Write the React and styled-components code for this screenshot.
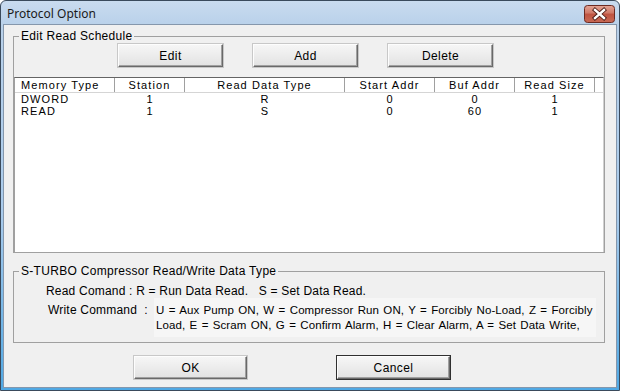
import React from "react";
import styled, { createGlobalStyle } from "styled-components";

const columns = [
  { title: "Memory Type", width: 100, align: "left" },
  { title: "Station", width: 70 },
  { title: "Read Data Type", width: 160 },
  { title: "Start Addr", width: 90 },
  { title: "Buf Addr", width: 80 },
  { title: "Read Size", width: 80 },
];

const rows = [
  ["DWORD", "1", "R", "0", "0", "1"],
  ["READ", "1", "S", "0", "60", "1"],
];

function CloseIcon() {
  return (
    <svg width="31" height="18" viewBox="0 0 31 18">
      <defs>
        <linearGradient id="cg" x1="0" y1="0" x2="0" y2="1">
          <stop offset="0" stopColor="#e4a596" />
          <stop offset="0.45" stopColor="#cf7867" />
          <stop offset="0.5" stopColor="#bf5341" />
          <stop offset="1" stopColor="#c86a55" />
        </linearGradient>
      </defs>
      <rect x="0.5" y="0.5" width="30" height="17" rx="3" fill="url(#cg)" stroke="#6b2a22" />
      <path d="M11 5 L20 13 M20 5 L11 13" stroke="#4a1a14" strokeWidth="4.2" strokeLinecap="square" />
      <path d="M11 5 L20 13 M20 5 L11 13" stroke="#ffffff" strokeWidth="2.4" strokeLinecap="square" />
    </svg>
  );
}

export default function App() {
  return (
    <Dialog.Window>
      <GlobalStyle />
      <Dialog.TitleBar>
        <Dialog.Title>Protocol Option</Dialog.Title>
        <Dialog.Close>
          <CloseIcon />
        </Dialog.Close>
      </Dialog.TitleBar>

      <Dialog.Client>
        <Group.Box>
          <Group.Legend>Edit Read Schedule</Group.Legend>
          <Toolbar>
            <Button>Edit</Button>
            <Button>Add</Button>
            <Button>Delete</Button>
          </Toolbar>
          <List.Wrapper>
            <List.Header>
              {columns.map((c) => (
                <List.HeadCell key={c.title} $align={c.align}>
                  {c.title}
                </List.HeadCell>
              ))}
              <List.HeadCell />
            </List.Header>
            {rows.map((r, i) => (
              <List.Row key={i}>
                {r.map((v, j) => (
                  <List.Cell key={j} $align={columns[j].align}>
                    {v}
                  </List.Cell>
                ))}
                <List.Cell />
              </List.Row>
            ))}
          </List.Wrapper>
        </Group.Box>

        <Group.Box $info>
          <Group.Legend>S-TURBO Compressor Read/Write Data Type</Group.Legend>
          <Info.ReadLine>
            Read Comand : R = Run Data Read.&nbsp;&nbsp; S = Set Data Read.
          </Info.ReadLine>
          <Info.WriteRow>
            <Info.Label>Write Command&nbsp;&nbsp;:</Info.Label>
            <Info.Text>
              <span>U = Aux Pump ON, W = Compressor Run ON, Y = Forcibly No-Load, Z = Forcibly</span>
              <span>Load, E = Scram ON, G = Confirm Alarm, H = Clear Alarm, A = Set Data Write,</span>
            </Info.Text>
          </Info.WriteRow>
        </Group.Box>

        <Footer>
          <Button $wide>OK</Button>
          <Button $wide $default>Cancel</Button>
        </Footer>
      </Dialog.Client>
    </Dialog.Window>
  );
}

const Dialog = {
  Window: styled.div`
    width: 620px;
    height: 391px;
    display: flex;
    flex-direction: column;
    border: 1px solid #3a4a5c;
    border-radius: 6px 6px 0 0;
    background: linear-gradient(#c9dbef 0, #b9d1ea 24px, #a9cbec 55%, #4fa8e4 100%);
    padding: 0 2px 2px 2px;
    overflow: hidden;
  `,
  TitleBar: styled.div`
    height: 23px;
    display: flex;
    align-items: center;
    justify-content: space-between;
    padding: 0 2px 0 4px;
  `,
  Title: styled.span`
    font-family: "Noto Sans", sans-serif;
    font-size: 12px;
    color: #1a1a1a;
    margin-top: 2px;
  `,
  Close: styled.div`
    display: flex;
    margin-top: 3px;
  `,
  Client: styled.div`
    flex: 1;
    display: flex;
    flex-direction: column;
    background: #f0f0f0;
    border: 1px solid #8597ac;
    padding: 4px 11px 0 9px;
  `,
};

const Group = {
  Box: styled.fieldset`
    margin: 0;
    padding: 0;
    min-width: 0;
    border: 1px solid #a0a0a0;
    margin-top: ${(p) => (p.$info ? "11px" : "0")};
    display: flex;
    flex-direction: column;
    padding-bottom: ${(p) => (p.$info ? "5px" : "0")};
  `,
  Legend: styled.legend`
    margin-left: 5px;
    padding: 0 2px;
    font-size: 12px;
    line-height: 14px;
    letter-spacing: 0.3px;
  `,
};

const Toolbar = styled.div`
  display: flex;
  gap: 30px;
  padding-left: 104px;
  margin-top: 1px;
`;

const Button = styled.button`
  width: ${(p) => (p.$wide ? "113px" : "105px")};
  height: 23px;
  font-family: "Liberation Sans", Arial, sans-serif;
  font-size: 12px;
  letter-spacing: 0.4px;
  color: #000;
  background: linear-gradient(#f6f6f6, #ececec 50%, #e2e2e2);
  border: 1px solid;
  border-color: #fdfdfd #696969 #696969 #fdfdfd;
  box-shadow: ${(p) =>
    p.$default ? "0 0 0 1px #303030, inset -1px -1px 0 #a0a0a0" : "inset -1px -1px 0 #a0a0a0, 0 0 0 1px #c8c8c8"};
  padding: 0;
`;

const grid = `
  display: grid;
  grid-template-columns: 100px 70px 160px 90px 80px 80px 1fr;
`;

const List = {
  Wrapper: styled.div`
    margin-top: 10px;
    height: 175px;
    background: #fff;
    border-top: 1px solid #646464;
    border-left: 1px solid #a0a0a0;
    border-right: 1px solid #d0d0d0;
    font-size: 11px;
    letter-spacing: 1.1px;
  `,
  Header: styled.div`
    ${grid}
    height: 15px;
    border-bottom: 1px solid #d5d5d5;
  `,
  HeadCell: styled.div`
    line-height: 14px;
    text-align: ${(p) => p.$align || "center"};
    padding-left: ${(p) => (p.$align ? "6px" : "0")};
    border-right: 1px solid #a0a0a0;
    white-space: nowrap;
    &:last-child {
      border-right: none;
    }
  `,
  Row: styled.div`
    ${grid}
    height: 12px;
  `,
  Cell: styled.div`
    line-height: 12px;
    text-align: ${(p) => p.$align || "center"};
    padding-left: ${(p) => (p.$align ? "6px" : "0")};
    white-space: nowrap;
  `,
};

const Info = {
  ReadLine: styled.div`
    margin-top: 7px;
    padding-left: 32px;
    font-size: 12px;
    line-height: 13px;
    letter-spacing: 0.2px;
    white-space: nowrap;
  `,
  WriteRow: styled.div`
    display: flex;
    align-items: flex-start;
  `,
  Label: styled.div`
    width: 140px;
    padding-left: 34px;
    padding-top: 5px;
    font-size: 12px;
    line-height: 15px;
    letter-spacing: 0.2px;
    white-space: nowrap;
  `,
  Text: styled.div`
    display: flex;
    flex-direction: column;
    padding: 5px 4px 4px 2px;
    background: #f6f6f6;
    font-size: 11.5px;
    line-height: 15px;
    letter-spacing: 0.1px;
    word-spacing: 1px;
    white-space: nowrap;
  `,
};

const Footer = styled.div`
  display: flex;
  gap: 90px;
  padding-left: 121px;
  margin-top: 13px;
`;

const GlobalStyle = createGlobalStyle`
  *, *::before, *::after {
    box-sizing: border-box;
  }
  body {
    margin: 0;
    background: #fff;
    font-family: "Liberation Sans", Arial, sans-serif;
    color: #000;
  }
`;
